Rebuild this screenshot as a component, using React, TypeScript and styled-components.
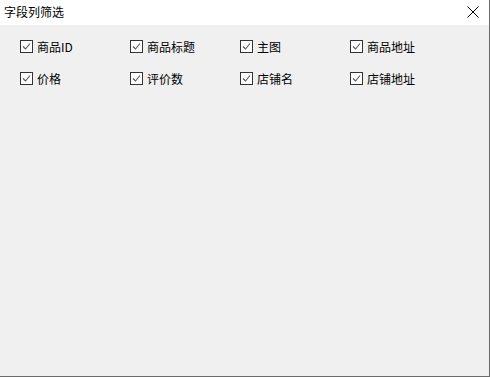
import React from "react";
import styled, { createGlobalStyle } from "styled-components";

const Global = createGlobalStyle`
  html, body { margin: 0; padding: 0; background: #f0f0f0; }
  body { font-family: "Noto Sans CJK SC", "Noto Sans", sans-serif; }
`;

const Window = styled.div`
  width: 490px;
  height: 377px;
  box-sizing: border-box;
  border-right: 1px solid #6b6b6b;
  border-bottom: 1px solid #6b6b6b;
  background: #f0f0f0;
  display: flex;
  flex-direction: column;
`;

const TitleBar = styled.div`
  height: 25px;
  background: #ffffff;
  display: flex;
  align-items: center;
  justify-content: space-between;
  padding: 0 8px 0 4px;
`;

const Title = styled.span`
  font-size: 12px;
  color: #000;
  line-height: 1;
  margin-top: -1px;
`;

const CloseBtn = styled.div`
  width: 16px;
  height: 16px;
  display: flex;
  align-items: center;
  justify-content: center;
  margin-top: -1px;
`;

const Grid = styled.div`
  display: grid;
  grid-template-columns: repeat(4, 110px);
  grid-auto-rows: 32px;
  padding: 15px 0 0 20px;
`;

const Item = styled.label`
  display: flex;
  align-items: flex-start;
  gap: 4px;
  font-size: 12px;
  color: #000;
  line-height: 13px;
`;

const Box = styled.span`
  width: 13px;
  height: 13px;
  box-sizing: border-box;
  border: 1px solid #333333;
  background: #ffffff;
  display: flex;
  align-items: center;
  justify-content: center;
  flex-shrink: 0;
`;

const Label = styled.span`
  white-space: nowrap;
`;

const fields = [
  "商品ID",
  "商品标题",
  "主图",
  "商品地址",
  "价格",
  "评价数",
  "店铺名",
  "店铺地址",
];

function Check() {
  return (
    <Box>
      <svg width="11" height="11" viewBox="0 0 11 11">
        <path d="M2 5.5 L4.5 8 L9 2.5" fill="none" stroke="#555" strokeWidth="1.1" />
      </svg>
    </Box>
  );
}

export default function App() {
  return (
    <>
      <Global />
      <Window>
        <TitleBar>
          <Title>字段列筛选</Title>
          <CloseBtn>
            <svg width="12" height="12" viewBox="0 0 12 12">
              <path d="M0.5 0.5 L11.5 11.5 M11.5 0.5 L0.5 11.5" stroke="#000" strokeWidth="1" />
            </svg>
          </CloseBtn>
        </TitleBar>
        <Grid>
          {fields.map((f) => (
            <Item key={f}>
              <Check />
              <Label>{f}</Label>
            </Item>
          ))}
        </Grid>
      </Window>
    </>
  );
}
